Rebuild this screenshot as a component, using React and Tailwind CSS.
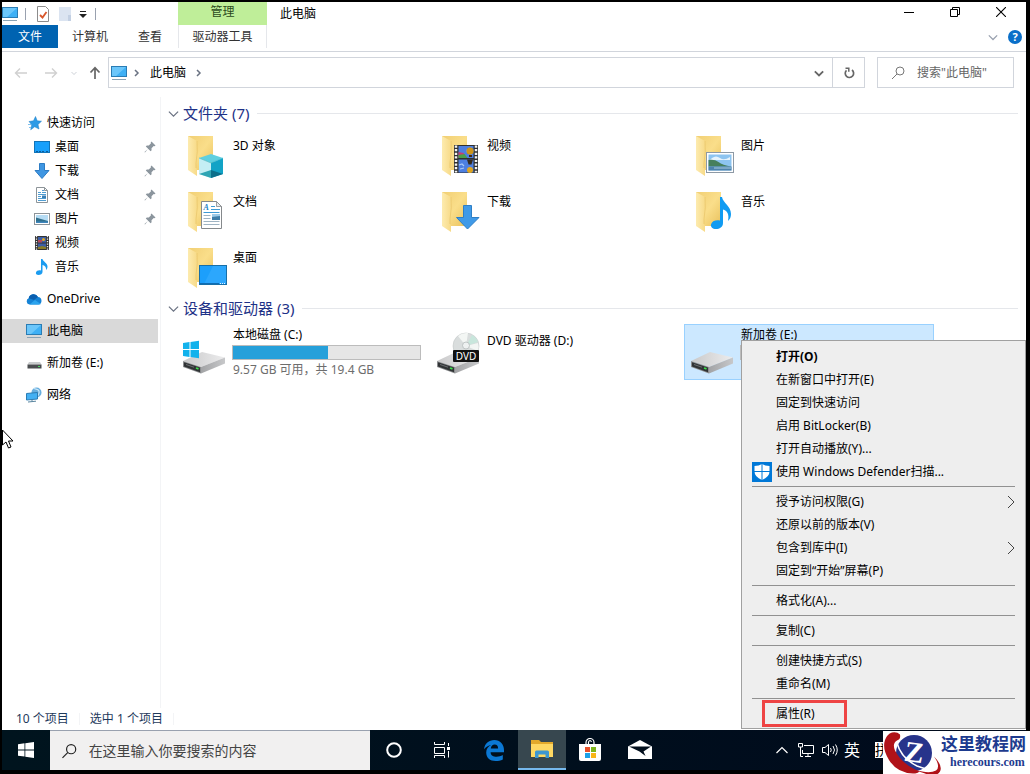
import { useState } from "react";

const PcIcon = ({ className }) => (
  <svg viewBox="0 0 16 16" className={className}>
    <rect x="0.5" y="1.5" width="15" height="10" fill="#3fb0f5" stroke="#2a7cb4" />
    <path d="M1 2h14L5 11H1z" fill="#7fd0fc" opacity="0.7" />
    <path d="M1 14.5h14" stroke="#8aa3b5" />
  </svg>
);

const DesktopIcon = () => (
  <svg viewBox="0 0 16 16" className="size-4">
    <rect x="0.5" y="2.5" width="15" height="11" fill="#18a0fb" stroke="#1274b8" />
    <path d="M2 12.5h9M12 12.5h2" stroke="#0b5c9b" strokeDasharray="2 1" />
  </svg>
);

const StarIcon = () => (
  <svg viewBox="0 0 16 16" className="size-4">
    <path d="M9.500 1.500l1.700 4.300 4.300.4-3.500 3.300 1 4.500-4.300-2.200-4 3 1-5L3 6.500l4.500-.7z" fill="#2e9be6" stroke="#1f7fc4" strokeWidth="0.500" />
    <path d="M2 9.500h3M3 12.500h2" stroke="#7fc1ee" />
  </svg>
);

const DownloadIcon = () => (
  <svg viewBox="0 0 16 16" className="size-4">
    <path d="M5.500.5h5v7H15l-7 8-7-8h4.500z" fill="#3f96e2" stroke="#2d7cc4" />
  </svg>
);

const DocumentIcon = () => (
  <svg viewBox="0 0 16 16" className="size-4">
    <path d="M2.500.5h8l3 3v12h-11z" fill="#fff" stroke="#8d9499" />
    <path d="M10.500.5v3h3" fill="none" stroke="#8d9499" />
    <path d="M4 5.500h3M8 3.500h2M8 5.500h4M4 7.500h8M4 9.500h3M4 11.500h8M4 13.500h8" stroke="#4f9dd2" />
    <rect x="8" y="8.500" width="4" height="2.500" fill="#3a7fb5" />
  </svg>
);

const PictureIcon = () => (
  <svg viewBox="0 0 16 16" className="size-4">
    <rect x="0.5" y="2.5" width="15" height="11" fill="#fff" stroke="#8d9499" />
    <rect x="2" y="4" width="12" height="8" fill="#b6dcf4" />
    <path d="M2 6.500l5 1.500 7 2v2H2z" fill="#2f6f8c" />
    <path d="M2 10.500h12V12H2z" fill="#3f86bd" />
  </svg>
);

const VideoIcon = () => (
  <svg viewBox="0 0 16 16" className="size-4">
    <rect x="1" y="1" width="14" height="14" fill="#333" />
    <path d="M2.500 1v14M13.500 1v14" stroke="#f2f2f2" strokeWidth="1.300" strokeDasharray="1.300 1.200" />
    <rect x="4" y="2" width="8" height="5.500" fill="#3d5fa6" />
    <rect x="4" y="8.500" width="8" height="5.500" fill="#3d5fa6" />
    <path d="M4 5h4v2.500H4z" fill="#b2485a" />
    <circle cx="9.500" cy="4.500" r="1.500" fill="#e5a91c" />
    <path d="M4 12l4-1 4 1v2H4z" fill="#8a7d28" />
  </svg>
);

const MusicIcon = () => (
  <svg viewBox="0 0 16 16" className="size-4">
    <path
      d="M7 0h1.500c.5 2.500 5 4 5 7.500 0 1.500-.5 2.500-1.500 3.500.5-3-1.500-4.500-3.500-5v7c0 2-2 3-4 3s-3-1-2.500-2.500C2.500 11.500 5 10.800 7 11.500z"
      fill="#1b9cf0"
    />
  </svg>
);

const CloudIcon = () => (
  <svg viewBox="0 0 16 16" className="size-4">
    <path d="M3.500 13.500a3.300 3.300 0 0 1-.8-6.300A5 5 0 0 1 12 6a3.800 3.800 0 0 1 .5 7.500z" fill="#1583d6" />
    <path d="M2.700 7.200A5 5 0 0 1 12 6L8 9z" fill="#0a5fb0" />
    <path d="M3.500 13.500L9 9l5.800 4a3.500 3.500 0 0 1-2.300.5z" fill="#2ba4ee" />
  </svg>
);

const SmallDriveIcon = () => (
  <svg viewBox="0 0 16 16" className="size-4">
    <path d="M3 7h11l1.500 2.500H1.500z" fill="#c9cccd" />
    <rect x="1.500" y="9.500" width="14" height="4" fill="#4a4d4f" />
    <rect x="12" y="11" width="2" height="1" fill="#4cd964" />
  </svg>
);

const NetworkPcIcon = () => (
  <svg viewBox="0 0 16 16" className="size-4">
    <circle cx="10.500" cy="5.500" r="5" fill="#67aede" />
    <path d="M8 1.500c2 1 4 0 5 2.500s-1 4-2 6" fill="none" stroke="#c9e6f8" strokeWidth="1.200" />
    <path d="M.5 6.500l11-1v6.500l-11 1z" fill="#43b0f3" stroke="#2a7cb4" />
    <path d="M6 12.500v2M2 15l8-.8" stroke="#59859f" />
  </svg>
);

const PinIcon = () => (
  <svg viewBox="0 0 12 12" className="size-3">
    <path d="M7.500.5l4 4-1 .8-.8-.2-2.200 2.200.1 2-1 1-2.500-2.500L1 11.500l-.5-.5 3.700-3.200L1.800 5.400l1-1 2 .1L7 2.300l-.3-.8z" fill="#8b959d" />
  </svg>
);

// Large icons share a 48px box: an open folder with the content laid over it
const Folder = ({ children }) => (
  <svg viewBox="0 0 48 48" className="size-12">
    <defs>
      <linearGradient id="folderBack" x1="0" y1="0" x2="1" y2="1">
        <stop offset="0" stopColor="#f1cf74" />
        <stop offset="0.500" stopColor="#fade8a" />
        <stop offset="1" stopColor="#e9c15c" />
      </linearGradient>
      <linearGradient id="folderFront" x1="0" y1="0" x2="1" y2="0">
        <stop offset="0" stopColor="#fdebaf" />
        <stop offset="1" stopColor="#f7da87" />
      </linearGradient>
    </defs>
    <path d="M8 4h25v34H8z" fill="url(#folderBack)" />
    <path d="M8 4l9 5q1 11-1 22v5l1 2v6l-9-6z" fill="url(#folderFront)" />
    <path d="M17 9q1 11-1 22v5" fill="none" stroke="#e8c469" strokeWidth="0.700" />
    {children}
  </svg>
);

const CubeFolder = () => (
  <Folder>
    <path d="M31 22l12 4-12 5-12-5z" fill="#5fcfdf" />
    <path d="M19 26l12 5v15l-12-4z" fill="#c4eef4" />
    <path d="M43 26l-12 5v15l12-4z" fill="#12a3c6" />
    <path d="M31 38l12 4-12 4z" fill="#0c6f8a" />
    <path d="M31 38v8l-12-4z" fill="#2fa5b4" />
    <path d="M19 26l12 5 12-5" fill="none" stroke="#3fb9cf" strokeWidth="0.600" />
  </Folder>
);

const VideoFolder = () => (
  <Folder>
    <rect x="20" y="13" width="24" height="28" fill="#2f3030" />
    <path d="M22 13.500v27M42 13.500v27" stroke="#f4f4f4" strokeWidth="2.500" strokeDasharray="2.200 1.400" />
    <rect x="24.500" y="14" width="15" height="12" fill="#4d7fe0" />
    <rect x="24.500" y="27.500" width="15" height="13" fill="#4d7fe0" />
    <path d="M24.500 20l5 1 3 5h-8z" fill="#c8406f" />
    <path d="M24.500 23l6-1 3 4h-9z" fill="#4aa04a" />
    <circle cx="36" cy="19" r="3.500" fill="#f0b51e" />
    <path d="M36 15.500v7M34 16v6M38 16v6" stroke="#7c4a10" strokeWidth="0.600" />
    <path d="M35 23h3v2h-3z" fill="#43290d" />
    <path d="M33 27.500h6l-1.500 5h-3z" fill="#352a1c" />
    <path d="M25 33l3-1 2 2M26 37l4-1" stroke="#a9c8f5" strokeWidth="1.200" fill="none" />
    <circle cx="36" cy="38" r="3" fill="#e0a51e" />
  </Folder>
);

const PictureFolder = () => (
  <Folder>
    <rect x="18.500" y="20.500" width="27" height="20" fill="#fff" stroke="#8d99a5" />
    <rect x="20.500" y="22.500" width="23" height="16" fill="#8dc4f0" />
    <path d="M24 26q4-3 8 0t10-1v3H22z" fill="#e6f3fc" />
    <path d="M20.500 28q6-1 10 2t13 4.500H20.500z" fill="#477f5c" />
    <path d="M20.500 34.500h23v4h-23z" fill="#4e83ad" />
    <path d="M26 36h17" stroke="#a9cbe0" />
  </Folder>
);

const DocumentFolder = () => (
  <Folder>
    <path d="M21.500 13.500h15l5 5v22h-20z" fill="#fff" stroke="#85898c" />
    <path d="M36.500 13.500v5h5z" fill="#e8ebed" stroke="#85898c" strokeWidth="0.800" />
    <text x="23.500" y="22" fontFamily="Liberation Serif, serif" fontSize="8" fontStyle="italic" fontWeight="bold" fill="#2180c4">
      A
    </text>
    <path d="M31 18.500h4M31 21.500h9M23.500 24.500h16" stroke="#3d9ad4" />
    <path d="M23.500 27.500h7M23.500 30.500h7M23.500 33.500h16M23.500 36.500h16" stroke="#9fb4c3" />
    <rect x="32" y="26" width="8" height="6" fill="#3f7ea8" />
    <path d="M32 26h8v2l-8 1z" fill="#9dcbe8" />
  </Folder>
);

const DownloadFolder = () => (
  <Folder>
    <path d="M29.500 17.500h8v12H45L33.500 41l-11-11.500h7z" fill="#3f9ae8" stroke="#2e7fc6" />
  </Folder>
);

const MusicFolder = () => (
  <Folder>
    <path
      d="M32 9h2c1 6 9 9 9 17 0 3-1 5-3 7 1.500-7-1-10.500-5-11.500V35c0 4-3.500 6-7 6s-5.500-2-5-4.500c.7-3.500 5-5 9-4z"
      fill="#109bf2"
    />
  </Folder>
);

const DesktopFolder = () => (
  <Folder>
    <rect x="19.500" y="21.500" width="27" height="19" fill="#1c9ffb" stroke="#176fa8" />
    <path d="M33 22h13v17L24 40z" fill="#3cb0ff" opacity="0.500" />
    <path d="M20 39.500h19" stroke="#0e6cb4" />
    <path d="M40 39.500h6" stroke="#e4f4ff" strokeDasharray="1 1" />
  </Folder>
);

const DriveIcon = ({ children }) => (
  <svg viewBox="0 0 48 48" className="size-12">
    <defs>
      <linearGradient id="driveTop" x1="0" y1="0" x2="1" y2="0">
        <stop offset="0" stopColor="#c9c9ca" />
        <stop offset="1" stopColor="#ececed" />
      </linearGradient>
      <linearGradient id="driveSide" x1="0" y1="0" x2="1" y2="0">
        <stop offset="0" stopColor="#a2a3a5" />
        <stop offset="1" stopColor="#c7c8ca" />
      </linearGradient>
    </defs>
    <path d="M3 34l19-9 23 5.500L21 40z" fill="url(#driveTop)" />
    <path d="M21 40l24-9.500v6L21 46.500z" fill="url(#driveSide)" />
    <path d="M3 34l18 6v6.500L3 40z" fill="#8a8c8e" />
    <path d="M4 35.200l16 5.300v4.700L4 39.500z" fill="#303335" />
    <path d="M6 37.500l8 2.700" stroke="#6a6d70" />
    <path d="M16 41l2.500.8" stroke="#3be04a" strokeWidth="1.800" />
    {children}
  </svg>
);

const SystemDrive = () => (
  <DriveIcon>
    <path d="M3 16l6.500-1v7H3zM10.500 14.900L19 13.700V22h-8.500zM3 23h6.500v7L3 29zM10.500 23H19v8.300l-8.500-1.200z" fill="#12b2ec" />
  </DriveIcon>
);

const DvdDrive = () => (
  <DriveIcon>
    <circle cx="32" cy="19" r="13" fill="#d9dddd" stroke="#c3c8c8" strokeWidth="0.600" />
    <path d="M32 19L24 9a13 13 0 0 1 10-3zM32 19l12-3a13 13 0 0 1 0 8z" fill="#f3f6f4" />
    <path d="M32 19l6-11a13 13 0 0 1 6 7z" fill="#c8e6dc" />
    <circle cx="32" cy="18.500" r="3.500" fill="#eef1f1" stroke="#b4baba" strokeWidth="0.800" />
    <rect x="19" y="23" width="26" height="12" rx="1" fill="#111" />
    <text x="32" y="32.500" textAnchor="middle" fontFamily="Noto Sans, sans-serif" fontSize="10" fill="#fff">
      DVD
    </text>
  </DriveIcon>
);

const Chevron = ({ d, className }) => (
  <svg viewBox="0 0 12 12" className={className} fill="none" stroke="currentColor">
    <path d={d} />
  </svg>
);

const DOWN = "M1 4l5 5 5-5";
const RIGHT = "M4 3l3 3-3 3";

const quickAccess = [
  { label: "桌面", icon: DesktopIcon, pinned: true },
  { label: "下载", icon: DownloadIcon, pinned: true },
  { label: "文档", icon: DocumentIcon, pinned: true },
  { label: "图片", icon: PictureIcon, pinned: true },
  { label: "视频", icon: VideoIcon },
  { label: "音乐", icon: MusicIcon },
];

const places = [
  { label: "OneDrive", icon: CloudIcon },
  { label: "此电脑", icon: () => <PcIcon className="size-4" />, selected: true },
  { label: "新加卷 (E:)", icon: SmallDriveIcon },
  { label: "网络", icon: NetworkPcIcon },
];

const folders = [
  { label: "3D 对象", icon: CubeFolder },
  { label: "视频", icon: VideoFolder },
  { label: "图片", icon: PictureFolder },
  { label: "文档", icon: DocumentFolder },
  { label: "下载", icon: DownloadFolder },
  { label: "音乐", icon: MusicFolder },
  { label: "桌面", icon: DesktopFolder },
];

const drives = [
  { label: "本地磁盘 (C:)", icon: SystemDrive, used: 51, detail: "9.57 GB 可用，共 19.4 GB" },
  { label: "DVD 驱动器 (D:)", icon: DvdDrive },
  { label: "新加卷 (E:)", icon: DriveIcon, used: 2, selected: true },
];

const menuGroups = [
  [
    { label: "打开(O)", bold: true },
    { label: "在新窗口中打开(E)" },
    { label: "固定到快速访问" },
    { label: "启用 BitLocker(B)" },
    { label: "打开自动播放(Y)..." },
    { label: "使用 Windows Defender扫描...", shield: true },
  ],
  [
    { label: "授予访问权限(G)", submenu: true },
    { label: "还原以前的版本(V)" },
    { label: "包含到库中(I)", submenu: true },
    { label: "固定到“开始”屏幕(P)" },
  ],
  [{ label: "格式化(A)..." }],
  [{ label: "复制(C)" }],
  [{ label: "创建快捷方式(S)" }, { label: "重命名(M)" }],
  [{ label: "属性(R)", marked: true }],
];

const TitleBar = () => (
  <div className="flex h-[23px]">
    <div className="flex w-44 items-center">
      <PcIcon className="size-4" />
      <span className="ml-[7px] h-3 w-px bg-gray-400" />
      <button aria-label="属性" className="ml-[11px]">
        <svg viewBox="0 0 12 16" className="h-4 w-3">
          <path d="M.5.5h8l3 3v12H.5z" fill="#fff" stroke="#8c8c8c" />
          <path d="M3 9l2.500 2.500L9.500 6" fill="none" stroke="#d8562a" strokeWidth="1.800" />
        </svg>
      </button>
      <button aria-label="新建文件夹" className="ml-[10px]">
        <svg viewBox="0 0 12 16" className="h-4 w-3">
          <path d="M0 1h12v14H0z" fill="#dbe4f1" />
          <path d="M9 9h3v6H9z" fill="#c3d0e3" />
        </svg>
      </button>
      <button aria-label="自定义快速访问工具栏" className="ml-2">
        <svg viewBox="0 0 8 8" className="size-2">
          <path d="M1 1h6v1H1zM0 4h8L4 8z" fill="#222" />
        </svg>
      </button>
      <span className="ml-2 h-3 w-px bg-gray-400" />
    </div>
    <div className="w-[89px] bg-[#bfee99] text-center leading-5 text-[#2c4a1c]">管理</div>
    <h1 className="pl-[13px] leading-6">此电脑</h1>
    <div className="ml-auto flex pr-[2px] pb-1">
      <button aria-label="最小化" className="flex w-[46px] items-center justify-center">
        <svg viewBox="0 0 10 10" className="size-[10px]" stroke="#000">
          <path d="M0 5.500h10" />
        </svg>
      </button>
      <button aria-label="向下还原" className="flex w-[46px] items-center justify-center">
        <svg viewBox="0 0 10 10" className="size-[10px]" stroke="#000" fill="none">
          <path d="M.5 2.500h7v7h-7zM2.500 2V.5h7v7H8" />
        </svg>
      </button>
      <button aria-label="关闭" className="flex w-[46px] items-center justify-center">
        <svg viewBox="0 0 10 10" className="size-[10px]" stroke="#000" strokeWidth="1.100">
          <path d="M0 0l10 10M10 0L0 10" />
        </svg>
      </button>
    </div>
  </div>
);

const Ribbon = () => (
  <div className="flex h-[27px] items-start border-b border-gray-300 leading-[23px]">
    <button className="w-14 bg-[#0063b1] text-white">文件</button>
    <button className="w-16 text-[#333]">计算机</button>
    <button className="w-14 text-[#333]">查看</button>
    <button className="w-[89px] border-x border-gray-200 text-[#333]">驱动器工具</button>
    <div className="ml-auto flex h-6 items-center gap-[10px] pr-1">
      <button aria-label="展开功能区">
        <Chevron d={DOWN} className="size-[10px] stroke-[1.5] text-gray-400" />
      </button>
      <button className="size-[14px] rounded-full bg-[#0a6fc9] text-[11px] leading-[14px] font-bold text-white">?</button>
    </div>
  </div>
);

const AddressRow = () => (
  <div className="flex h-9 items-end pr-3">
    <div className="flex h-[31px] w-[106px] items-center">
      <button aria-label="后退" className="ml-3">
        <svg viewBox="0 0 14 12" className="h-3 w-[14px]" fill="none" stroke="#d0d0d0" strokeWidth="1.400">
          <path d="M13 6H1.500M6 1.500L1.500 6 6 10.500" />
        </svg>
      </button>
      <button aria-label="前进" className="ml-4">
        <svg viewBox="0 0 14 12" className="h-3 w-[14px]" fill="none" stroke="#d0d0d0" strokeWidth="1.400">
          <path d="M1 6h11.500M8 1.500L12.500 6 8 10.500" />
        </svg>
      </button>
      <button aria-label="最近浏览的位置" className="ml-[13px]">
        <Chevron d={DOWN} className="size-[6px] text-gray-400" />
      </button>
      <button aria-label="上移" className="ml-3">
        <svg viewBox="0 0 12 14" className="h-[14px] w-3" fill="none" stroke="#666" strokeWidth="1.700">
          <path d="M6 13V2M1.500 6.500L6 1.700l4.500 4.800" />
        </svg>
      </button>
    </div>
    <div className="flex h-[31px] flex-1 items-center border border-gray-300">
      <PcIcon className="ml-[2px] size-4" />
      <Chevron d={RIGHT} className="ml-1 size-3 stroke-[1.5] text-gray-500" />
      <button className="mx-[7px]">此电脑</button>
      <Chevron d={RIGHT} className="size-3 stroke-[1.5] text-gray-500" />
      <button aria-label="以前的位置" className="mr-2 ml-auto">
        <Chevron d={DOWN} className="size-[10px] stroke-[2.2] text-[#666]" />
      </button>
    </div>
    <button aria-label="刷新" className="flex h-[31px] w-8 items-center justify-center border border-l-0 border-gray-300">
      <svg viewBox="0 0 12 12" className="size-3" fill="none" stroke="#666" strokeWidth="1.700">
        <path d="M9 3a4.200 4.200 0 1 1-5.500.3" />
        <path d="M2.500 1.200h3.300v3.600" strokeWidth="1.500" />
      </svg>
    </button>
    <label className="ml-3 flex h-[31px] w-[137px] items-center border border-gray-300">
      <svg viewBox="0 0 14 14" className="ml-[13px] size-[14px] shrink-0" fill="none" stroke="#777">
        <circle cx="9" cy="5" r="4" />
        <path d="M6 8l-5 5" />
      </svg>
      <input
        aria-label="搜索"
        placeholder={'搜索"此电脑"'}
        className="ml-3 w-full min-w-0 bg-transparent outline-none placeholder:text-[#666]"
      />
    </label>
  </div>
);

const Sidebar = () => (
  <nav className="w-[159px] shrink-0 border-r border-gray-100 pt-[14px]">
    <a href="#quick" className="flex h-6 items-center gap-[5px] pl-6">
      <StarIcon />
      快速访问
    </a>
    {quickAccess.map(({ label, icon: Icon, pinned }) => (
      <a key={label} href="#quick" className="mr-[2px] flex h-6 items-center gap-[5px] pr-[2px] pl-8">
        <Icon />
        <span className="flex-1">{label}</span>
        {pinned && <PinIcon />}
      </a>
    ))}
    {places.map(({ label, icon: Icon, selected }) => (
      <a
        key={label}
        href="#place"
        className={`mt-2 mr-[2px] flex h-6 items-center gap-[5px] pl-6 ${selected ? "bg-[#d9d9d9]" : ""}`}
      >
        <Icon />
        {label}
      </a>
    ))}
  </nav>
);

const ContextMenu = () => (
  <div
    role="menu"
    className="absolute top-4 left-[57px] z-10 w-[285px] border border-[#a0a0a0] bg-[#eeeeee] pt-1 pb-[3px] text-black"
  >
    {menuGroups.map((group, i) => (
      <div key={i}>
        {i > 0 && <div role="separator" className="mx-[10px] my-[3px] h-px bg-[#919191]" />}
        {group.map((item) => (
          <button
            key={item.label}
            role="menuitem"
            className={`relative flex h-[23px] w-full items-center pr-[10px] pl-[34px] ${item.bold ? "font-bold" : ""}`}
          >
            {item.shield && (
              <svg viewBox="0 0 20 20" className="absolute left-[10px] size-5">
                <path d="M0 0h20v20H0z" fill="#0078d7" />
                <path d="M10 2q3 2 7.500 2v5.500q0 5.500-7.500 8.500-7.500-3-7.500-8.500V4Q7 4 10 2z" fill="#fff" />
                <path d="M10 2v16M2 9.500h16" stroke="#0078d7" />
              </svg>
            )}
            {item.label}
            {item.submenu && (
              <svg viewBox="0 0 8 14" className="ml-auto h-[14px] w-2" fill="none" stroke="#444">
                <path d="M1 1l6 6-6 6" />
              </svg>
            )}
            {item.marked && <span className="absolute -top-[2px] left-5 h-[27px] w-[85px] border-3 border-[#ee4444]" />}
          </button>
        ))}
      </div>
    ))}
  </div>
);

const Tile = ({ item, menu }) => {
  const Icon = item.icon;
  const hasBar = item.used !== undefined;
  return (
    <li className="relative">
      <button
        className={`flex h-14 w-full items-start gap-[5px] border pt-[2px] pl-[3px] text-left ${
          item.selected ? "border-[#99d1ff] bg-[#cce8ff]" : "border-transparent"
        }`}
      >
        <Icon />
        <span className={`flex w-[188px] flex-col leading-4 ${hasBar ? "" : "pt-[6px]"}`}>
          {item.label}
          {hasBar && (
            <span className="my-[2px] -ml-px block h-[15px] border border-[#bcbcbc] bg-[#e6e6e6]">
              <span className="block h-full bg-[#26a0da]" style={{ width: `${item.used}%` }} />
            </span>
          )}
          {item.detail && <span className="text-[#6d6d6d]">{item.detail}</span>}
        </span>
      </button>
      {menu}
    </li>
  );
};

const Group = ({ title, items, renderMenu }) => {
  const [open, setOpen] = useState(true);
  return (
    <section>
      <button
        onClick={() => setOpen(!open)}
        className="mb-[5px] flex h-[22px] w-full items-center pr-2 pl-[7px] text-[15px] text-[#1e3287]"
      >
        <Chevron d={DOWN} className="mr-1 size-[11px] stroke-[1.3] text-gray-500" />
        {title}
        <span className="ml-2 h-px flex-1 bg-gray-200" />
      </button>
      {open && (
        <ul className="grid grid-cols-[repeat(auto-fill,250px)] gap-x-1 pl-[15px]">
          {items.map((item) => (
            <Tile key={item.label} item={item} menu={item.selected && renderMenu ? renderMenu() : null} />
          ))}
        </ul>
      )}
    </section>
  );
};

const Taskbar = () => (
  <footer className="flex h-10 bg-linear-to-r from-[#00141e] to-[#000a1c] text-white">
    <button aria-label="开始" className="flex w-12 items-center justify-center">
      <svg viewBox="0 0 16 16" className="size-4" fill="#fff">
        <path d="M0 2.200l6.500-.9v6.200H0zM7.300 1.200L16 0v7.500H7.300zM0 8.400h6.500v6.200L0 13.700zM7.300 8.400H16V16l-8.700-1.200z" />
      </svg>
    </button>
    <label className="flex w-80 items-center border-t border-gray-400 bg-[#f1f0f0] pl-3">
      <svg viewBox="0 0 16 16" className="size-4" fill="none" stroke="#222" strokeWidth="1.300">
        <circle cx="10" cy="6" r="5" />
        <path d="M6.500 9.500L.5 15.500" />
      </svg>
      <input
        aria-label="搜索"
        placeholder="在这里输入你要搜索的内容"
        className="ml-3 w-full min-w-0 bg-transparent text-sm text-black outline-none placeholder:text-[#444]"
      />
    </label>
    <button aria-label="Cortana" className="flex w-12 items-center justify-center">
      <svg viewBox="0 0 16 16" className="size-4" fill="none" stroke="#fff" strokeWidth="2">
        <circle cx="8" cy="8" r="6.800" />
      </svg>
    </button>
    <button aria-label="任务视图" className="mr-1 flex w-12 items-center justify-center">
      <svg viewBox="0 0 16 16" className="size-4" fill="none" stroke="#fff">
        <path d="M.5 0v2.500h10V0M.5 5.500h10v6H.5zM.5 16v-2.500h10V16M14.500 1v3M14.500 9v6.500" />
        <path d="M13 5h3v3h-3z" fill="#fff" stroke="none" />
      </svg>
    </button>
    <button aria-label="Edge" className="flex w-12 items-center justify-center">
      <svg viewBox="0 0 20 21" className="h-[21px] w-5" fill="#0b78d4">
        <path d="M0 9.200C.8 3.500 4.800 0 10.300 0 16.300 0 20 4.400 20 10.200v2H6.600c.2 3.400 2.800 4.600 6 4.600 2.300 0 4.300-.6 6.200-1.700v4.300c-2.100 1.100-4.500 1.600-7.200 1.600-5.800 0-9.400-3.300-9.400-8.500 0-3.600 1.900-6.200 5-7.600C4.300 5.400 1.700 6.700 0 9.200zM6.800 8.400h7.300c0-2.400-1.200-3.800-3.400-3.800-2.100 0-3.500 1.400-3.900 3.800z" />
      </svg>
    </button>
    <button aria-label="文件资源管理器" className="flex w-12 items-center justify-center border-b-2 border-[#76b9ed] bg-[#37474f]">
      <svg viewBox="0 0 22 20" className="h-5 w-[22px]">
        <path d="M0 1h8l2 2h12v15H0z" fill="#e3a92b" />
        <path d="M0 5h22v13H0z" fill="#ffd863" />
        <path d="M4 19v-6q0-1.500 1.500-1.500h11q1.500 0 1.500 1.500v6h-3.500v-3.500h-7V19z" fill="#3e97d1" />
      </svg>
    </button>
    <button aria-label="应用商店" className="flex w-12 items-center justify-center">
      <svg viewBox="0 0 24 24" className="size-6">
        <path d="M8 7V4.500a4 4 0 0 1 8 0V7M10.500 6V4q1.500-3 3 0" fill="none" stroke="#fff" strokeWidth="1.200" />
        <path d="M1 6h22v15q0 2-2 2H3q-2 0-2-2z" fill="#fff" />
        <path d="M7 9h5v5H7z" fill="#e8502a" />
        <path d="M13 9h5v5h-5z" fill="#7db51c" />
        <path d="M7 15h5v5H7z" fill="#1ba1e8" />
        <path d="M13 15h5v5h-5z" fill="#f9b618" />
      </svg>
    </button>
    <button aria-label="邮件" className="flex w-12 items-center justify-center pl-1">
      <svg viewBox="0 0 24 20" className="h-5 w-6">
        <path d="M0 6.500L12 0l12 6.500V19H0z" fill="#fff" />
        <path d="M1 6.500h22l-7.500 5 2 4.500-6-4.500z" fill="#020f1d" />
      </svg>
    </button>
    <div className="ml-auto flex items-center pr-[137px]">
      <button aria-label="显示隐藏的图标">
        <svg viewBox="0 0 12 8" className="h-2 w-3" fill="none" stroke="#fff" strokeWidth="1.200">
          <path d="M.5 7L6 1.500 11.500 7" />
        </svg>
      </button>
      <button aria-label="网络" className="ml-[10px]">
        <svg viewBox="0 0 16 14" className="h-[14px] w-4" fill="none" stroke="#fff">
          <path d="M6 2.500h9.500v8H4.500V7M7 13.500h6M10 11v2M.5.500h4v3.500h-4zM2.500 4v9.500H5" />
        </svg>
      </button>
      <button aria-label="音量" className="ml-2">
        <svg viewBox="0 0 16 14" className="h-[14px] w-4" fill="none" stroke="#fff">
          <path d="M.5 4.500H3l3.500-3v11L3 9.500H.5zM8.500 5q1.500 2 0 4M11 3q3 4 0 8M13.500 1.500q3.500 5.500 0 11" />
        </svg>
      </button>
      <button className="ml-[6px] text-base">英</button>
      <button className="ml-[15px] bg-white text-sm leading-4 text-black">拼</button>
    </div>
  </footer>
);

const SiteBadge = () => (
  <div className="absolute right-0 bottom-0 z-20 flex h-[43px] w-[147px] items-start bg-white">
    <svg viewBox="0 0 58 43" className="h-[43px] w-[58px] shrink-0">
      <circle cx="31" cy="22" r="18" fill="#27348b" />
      <path
        d="M9 1.500q5-1 8 2 1 5-3 6-5 3-2 10 6 12 20 19 14 5 21 1 5-4-2-14 9 9 6 15-5 7-15 2-3-1-6-2-1 2-6 2Q14 42 6 29-1 18 2 9q2-6 7-7.500z"
        fill="#b01319"
      />
      <path d="M14 12q4 15 20 23 13 5 19 3" fill="none" stroke="#fff" strokeWidth="1.500" />
      <text
        x="31"
        y="31"
        textAnchor="middle"
        fontFamily="Liberation Serif, serif"
        fontSize="29"
        fontWeight="bold"
        transform="rotate(8 31 22)"
        fill="#fff"
      >
        Z
      </text>
    </svg>
    <div className="flex flex-col items-center pt-[3px] text-[#1d3b8f]">
      <span className="text-[17px] leading-5 font-bold">这里教程网</span>
      <span className="pl-2 font-['Liberation_Serif',serif] text-[12px] leading-4 font-bold">herecours.com</span>
    </div>
  </div>
);

const App = () => (
  <div className="relative flex min-h-screen flex-col bg-black pt-[2px] pr-1 pb-1 pl-[2px] font-['Noto_Sans','Noto_Sans_CJK_SC',sans-serif] text-xs text-black">
    <div className="flex flex-1 flex-col bg-white">
      <TitleBar />
      <Ribbon />
      <AddressRow />
      <div className="flex flex-1 pt-[9px]">
        <Sidebar />
        <main className="flex-1 pt-[5px]">
          <Group title="文件夹 (7)" items={folders} />
          <Group title="设备和驱动器 (3)" items={drives} renderMenu={() => <ContextMenu />} />
        </main>
      </div>
      <div className="flex h-[22px] items-center gap-[10px] pl-[14px] text-[#1e395b]">
        <span>10 个项目</span>
        <span className="h-3 w-px bg-gray-100" />
        <span>选中 1 个项目</span>
        <span className="h-3 w-px bg-gray-100" />
      </div>
    </div>
    <Taskbar />
    <SiteBadge />
    <svg viewBox="0 0 12 20" className="absolute top-[429px] left-[2px] h-5 w-3">
      <path d="M.5 1v15l3.500-3 2.500 6 2.500-1-2.500-6H11z" fill="#fff" stroke="#000" />
    </svg>
  </div>
);

export default App;
